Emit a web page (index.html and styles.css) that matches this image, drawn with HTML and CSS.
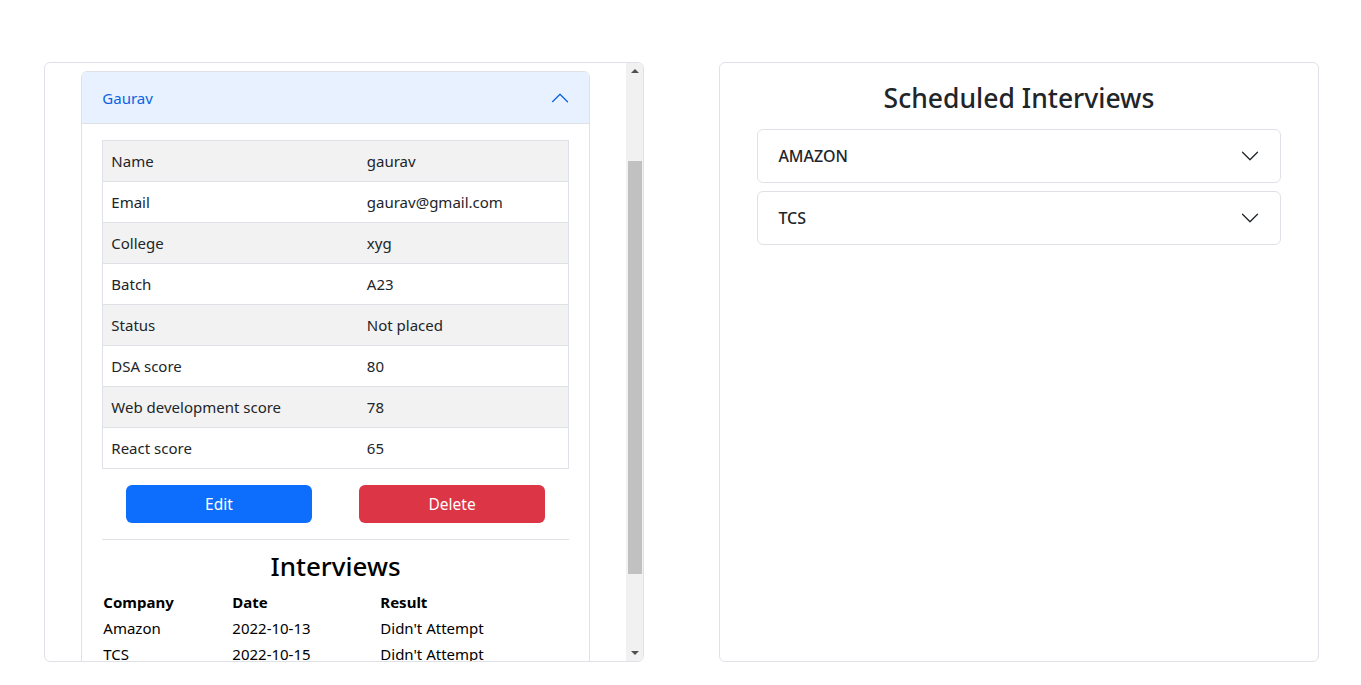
FILE: index.html
```html
<!DOCTYPE html>
<html lang="en">
<head>
<meta charset="utf-8">
<title>Placement Dashboard</title>
<link rel="stylesheet" href="styles.css">
</head>
<body>
<main class="page">
  <section class="card students">
    <div class="viewport">
      <div class="list">
        <div class="acc">
          <div class="acc-head">
            <span>Gaurav</span>
            <svg class="chev" viewBox="0 0 16 16" width="20" height="20"><path fill="#0c63e4" fill-rule="evenodd" d="M1.646 11.354a.5.5 0 0 1 .708 0L8 5.707l5.646 5.647a.5.5 0 0 0 .708-.708l-6-6a.5.5 0 0 0-.708 0l-6 6a.5.5 0 0 0 0 .708z"/></svg>
          </div>
          <div class="acc-body">
            <table class="info">
              <tr><td>Name</td><td>gaurav</td></tr>
              <tr><td>Email</td><td>gaurav@gmail.com</td></tr>
              <tr><td>College</td><td>xyg</td></tr>
              <tr><td>Batch</td><td>A23</td></tr>
              <tr><td>Status</td><td>Not placed</td></tr>
              <tr><td>DSA score</td><td>80</td></tr>
              <tr><td>Web development score</td><td>78</td></tr>
              <tr><td>React score</td><td>65</td></tr>
            </table>
            <div class="actions">
              <div class="act-col"><button class="btn btn-primary">Edit</button></div>
              <div class="act-col"><button class="btn btn-danger">Delete</button></div>
            </div>
            <hr class="divider">
            <h3 class="iv-title">Interviews</h3>
            <div class="iv-grid">
              <b>Company</b><b>Date</b><b>Result</b>
              <span>Amazon</span><span>2022-10-13</span><span>Didn't Attempt</span>
              <span>TCS</span><span>2022-10-15</span><span>Didn't Attempt</span>
            </div>
          </div>
        </div>
      </div>
    </div>
    <div class="sbar">
      <div class="sbtn"><span class="tri-up"></span></div>
      <div class="strack"><div class="sthumb"></div></div>
      <div class="sbtn"><span class="tri-down"></span></div>
    </div>
  </section>
  <section class="card scheduled">
    <h2 class="sched-title">Scheduled Interviews</h2>
    <div class="sched-list">
      <div class="sched-item">
        <span>AMAZON</span>
        <svg class="chev" viewBox="0 0 16 16" width="20" height="20"><path fill="#212529" fill-rule="evenodd" d="M1.646 4.646a.5.5 0 0 1 .708 0L8 10.293l5.646-5.647a.5.5 0 0 1 .708.708l-6 6a.5.5 0 0 1-.708 0l-6-6a.5.5 0 0 1 0-.708z"/></svg>
      </div>
      <div class="sched-item">
        <span>TCS</span>
        <svg class="chev" viewBox="0 0 16 16" width="20" height="20"><path fill="#212529" fill-rule="evenodd" d="M1.646 4.646a.5.5 0 0 1 .708 0L8 10.293l5.646-5.647a.5.5 0 0 1 .708.708l-6 6a.5.5 0 0 1-.708 0l-6-6a.5.5 0 0 1 0-.708z"/></svg>
      </div>
    </div>
  </section>
</main>
</body>
</html>
```
FILE: styles.css
```css
* { box-sizing: border-box; }
html, body { margin: 0; padding: 0; }
body {
  font-family: "Noto Sans", "Open Sans", sans-serif;
  font-size: 15px;
  color: #212529;
  background: #fff;
}
.page {
  display: flex;
  gap: 75px;
  padding: 62px 0 0 44px;
}
.card {
  width: 600px;
  height: 600px;
  border: 1px solid #dee2e6;
  border-radius: 6px;
  background: #fff;
}
.students {
  display: flex;
  overflow: hidden;
}
.viewport {
  flex: 1;
  min-width: 0;
  overflow: hidden;
}
.sbar {
  width: 17px;
  display: flex;
  flex-direction: column;
  background: #f1f1f1;
}
.sbtn {
  height: 16px;
  display: flex;
  align-items: center;
  justify-content: center;
}
.tri-up, .tri-down {
  width: 0;
  height: 0;
  border-left: 4px solid transparent;
  border-right: 4px solid transparent;
}
.tri-up { border-bottom: 4px solid #505050; }
.tri-down { border-top: 4px solid #505050; }
.strack {
  flex: 1;
  padding: 82px 1px 0 2px;
}
.sthumb {
  height: 413px;
  background: #c1c1c1;
}
.list {
  width: 87.5%;
  margin: 0 auto;
  padding-top: 8px;
}
.acc {
  border: 1px solid #dee2e6;
  border-radius: 6px;
  overflow: hidden;
}
.acc-head {
  height: 52px;
  display: flex;
  align-items: center;
  justify-content: space-between;
  padding: 0 19px 0 20px;
  background: #e7f1ff;
  color: #0c63e4;
  border-bottom: 1px solid #dee2e6;
  font-size: 15px;
}
.acc-body { padding: 16px 20px 16px; }
.info {
  width: 100%;
  border-collapse: collapse;
  border: 1px solid #dee2e6;
}
.info td {
  height: 41px;
  padding: 0 8px;
  border-top: 1px solid #dee2e6;
  vertical-align: middle;
}
.info td:first-child { width: 256px; }
.info tr:nth-child(odd) td { background: #f2f2f2; }
.actions {
  display: flex;
  margin-top: 16px;
}
.act-col { flex: 1; display: flex; justify-content: center; }
.act-col .btn { width: 80%; }
.btn {
  height: 38px;
  border: none;
  border-radius: 6px;
  color: #fff;
  font-family: inherit;
  font-size: 15.5px;
}
.btn-primary { background: #0d6efd; }
.btn-danger { background: #dc3545; }
.divider {
  margin: 16px 0 0;
  border: 0;
  border-top: 1px solid #dee2e6;
}
.iv-title {
  margin: 10px 0 7px;
  font-size: 26px;
  font-weight: 500;
  line-height: 32px;
  text-align: center;
  color: #000;
}
.iv-grid {
  display: grid;
  grid-template-columns: 129px 148px 1fr;
  grid-auto-rows: 26px;
  align-items: center;
  padding-left: 1px;
  color: #000;
}
.iv-grid b { font-weight: 700; }
.sched-title {
  margin: 18px 0 14px;
  font-size: 26.5px;
  font-weight: 500;
  line-height: 34px;
  text-align: center;
}
.sched-list {
  width: 87.5%;
  margin: 0 auto;
  display: flex;
  flex-direction: column;
  gap: 8px;
}
.sched-item {
  height: 54px;
  border: 1px solid #dee2e6;
  border-radius: 6px;
  display: flex;
  align-items: center;
  justify-content: space-between;
  padding: 0 20px 0 20px;
  font-size: 16px;
  font-weight: 500;
}
```
